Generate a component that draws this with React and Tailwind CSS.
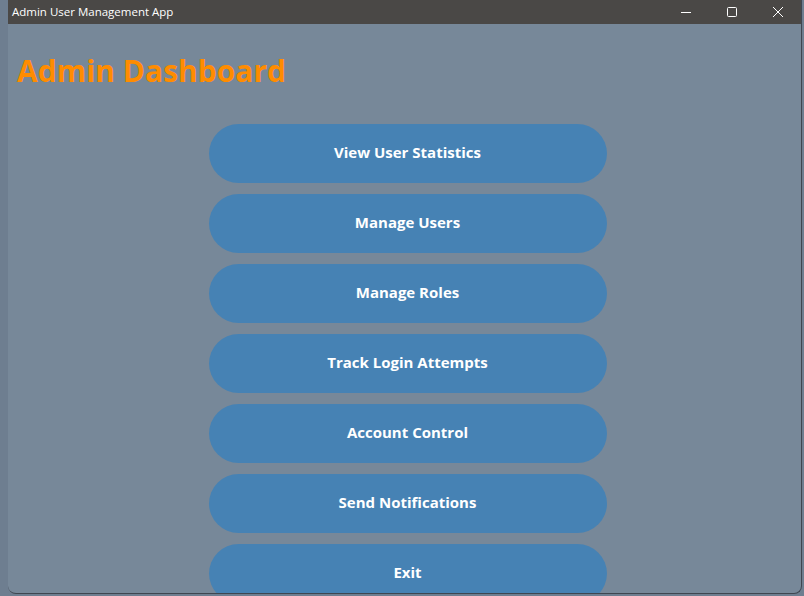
const actions = [
    'View User Statistics',
    'Manage Users',
    'Manage Roles',
    'Track Login Attempts',
    'Account Control',
    'Send Notifications',
    'Exit',
]

const TitleBar = () => {
    return (
        <div className="flex h-6 shrink-0 items-center bg-[#4a4846] text-white">
            <span className="flex-1 pl-1 text-[11.5px] font-['Open_Sans',sans-serif]">
                Admin User Management App
            </span>
            <div className="flex h-full">
                <button className="flex w-[46px] items-center justify-center">
                    <svg width="10" height="10" viewBox="0 0 10 10">
                        <path d="M0 5.5h10" stroke="white" strokeWidth="1" />
                    </svg>
                </button>
                <button className="flex w-[46px] items-center justify-center">
                    <svg width="10" height="10" viewBox="0 0 10 10">
                        <rect x="0.5" y="0.5" width="9" height="9" rx="1" fill="none" stroke="white" strokeWidth="1" />
                    </svg>
                </button>
                <button className="flex w-[46px] items-center justify-center">
                    <svg width="10" height="10" viewBox="0 0 10 10">
                        <path d="M0 0L10 10M10 0L0 10" stroke="white" strokeWidth="1" />
                    </svg>
                </button>
            </div>
        </div>
    )
}

export default function App() {
    return (
        <div className="flex h-[596px] w-[804px] overflow-hidden bg-[#6e7e90] pb-[2px] pl-2 pr-[2px] font-['Open_Sans',sans-serif]">
            <div className="flex flex-1 flex-col overflow-hidden rounded-b-lg border-r border-b border-[#3f4650] bg-[#778899]">
                <TitleBar />
                <h1 className="mt-[27px] pl-[9px] text-[30px] leading-[40px] font-bold text-[#ff8c00]">
                    Admin Dashboard
                </h1>
                <div className="mt-[33px] flex flex-col items-center gap-[11px] pl-[6px]">
                    {actions.map((label) => (
                        <button
                            key={label}
                            className="h-[59px] w-[398px] shrink-0 rounded-full bg-[#4682b4] pb-[3px] text-[15px] font-bold text-white"
                        >
                            {label}
                        </button>
                    ))}
                </div>
            </div>
        </div>
    )
}
